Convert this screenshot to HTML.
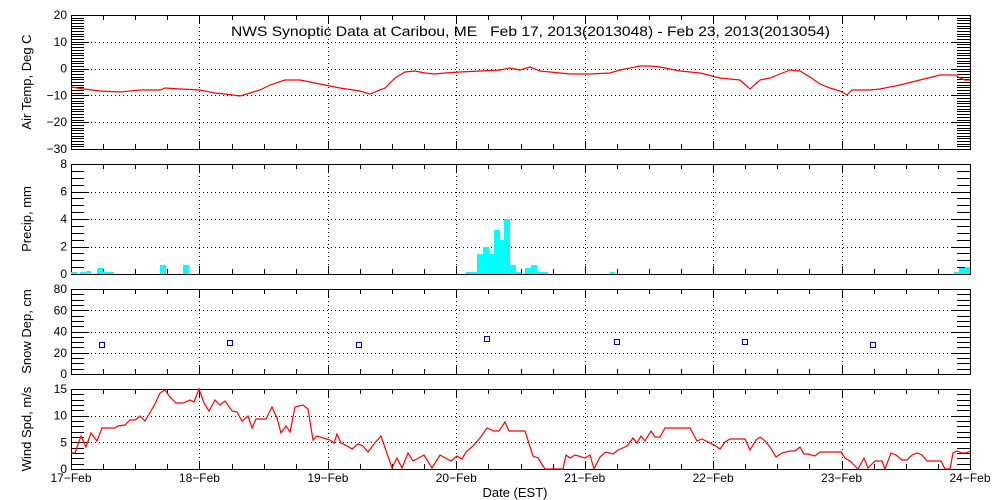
<!DOCTYPE html>
<html><head><meta charset="utf-8"><style>
html,body{margin:0;padding:0;background:#fff;width:1000px;height:500px;overflow:hidden}
svg{display:block}
text{font-family:"Liberation Sans",sans-serif;fill:#000}
</style></head><body>
<svg id="s" width="1000" height="500" viewBox="0 0 1000 500" xmlns="http://www.w3.org/2000/svg" shape-rendering="crispEdges">
<text x="231" y="36" font-size="14" textLength="599" lengthAdjust="spacingAndGlyphs" xml:space="preserve">NWS Synoptic Data at Caribou, ME   Feb 17, 2013(2013048) - Feb 23, 2013(2013054)</text>
<text x="515" y="497" font-size="13" text-anchor="middle">Date (EST)</text>
<g id="g"></g>
</svg>
<script>
var g=document.getElementById('g'),h='';
var X0=71,X1=970,DW=(X1-X0)/7;
function L(x1,y1,x2,y2,c,extra){h+='<line x1="'+x1+'" y1="'+y1+'" x2="'+x2+'" y2="'+y2+'" stroke="'+(c||'#000')+'" stroke-width="1" '+(extra||'')+'/>';}
function T(x,y,s,a,sz,ex){h+='<text x="'+x+'" y="'+y+'" font-size="'+(sz||12)+'" text-anchor="'+(a||'end')+'" '+(ex||'')+'>'+s+'</text>';}
var P=[
 {t:15,b:149,min:-30,max:20,minor:1,major:10,labels:[-30,-20,-10,0,10,20],grid:[-20,-10,0,10],name:'Air Temp, Deg C'},
 {t:164,b:274,min:0,max:8,minor:0.5,major:2,labels:[0,2,4,6,8],grid:[2,4,6],name:'Precip, mm'},
 {t:289,b:374,min:0,max:80,minor:5,major:20,labels:[0,20,40,60,80],grid:[20,40,60],name:'Snow Dep, cm'},
 {t:389,b:469,min:0,max:15,minor:1,major:5,labels:[0,5,10,15],grid:[5,10],name:'Wind Spd, m/s'}];
P.forEach(function(p,i){
 var Y=function(v){return p.b-(v-p.min)/(p.max-p.min)*(p.b-p.t);};p.Y=Y;
 p.grid.forEach(function(v){var y=Math.round(Y(v))+.5;L(X0,y,X1,y,'#000','stroke-dasharray="1,3"');});
 for(var d=1;d<7;d++){var x=Math.round(X0+d*DW)+.5;L(x,p.t,x,p.b,'#000','stroke-dasharray="1,3"');}
 for(var v=p.min;v<=p.max+1e-6;v+=p.minor){var y=Math.round(Y(v))+.5;var mj=Math.abs(v/p.major-Math.round(v/p.major))<1e-6;var len=mj?18:13;L(X0,y,X0+len,y);L(X1-len,y,X1,y);}
 for(var q=1;q<28;q++){var x=Math.round(X0+q*DW/4)+.5;var len=q%4==0?8:5;L(x,p.t,x,p.t+len);L(x,p.b-len,x,p.b);}
 h+='<rect x="'+(X0+.5)+'" y="'+(p.t+.5)+'" width="'+(X1-X0)+'" height="'+(p.b-p.t)+'" fill="none" stroke="#000" stroke-width="1.2"/>';
 p.labels.forEach(function(v){T(67,Y(v)+4,(v<0?'\u2212':'')+Math.abs(v),'end',12);});
 var cy=(p.t+p.b)/2;T(31,cy,p.name,'middle',13,'transform="rotate(-90 31 '+cy+')" dy="-0"');
});
var days=['17','18','19','20','21','22','23','24'];
days.forEach(function(d,i){T(X0+i*DW,482,d+'\u2212Feb','middle',12);});
// temp
var tp=[[71,87],[84,89],[100,91],[120,92],[140,90],[160,90],[165,88],[180,89],[200,90],[215,93],[225,94],[240,96],[250,93],[260,90],[270,85],[285,80],[300,80],[320,84],[340,88],[360,91],[370,94],[385,88],[395,78],[405,72],[415,71],[425,73],[435,74],[445,73],[460,72],[480,71],[500,70],[510,68],[520,70],[530,67],[540,71],[550,72],[560,73],[570,74],[590,74],[610,73],[620,70],[640,66],[650,66],[660,67],[680,71],[700,73],[720,78],[740,80],[750,89],[760,80],[770,78],[780,74],[790,70],[800,71],[810,77],[820,84],[830,88],[840,91],[847,95],[852,90],[870,90],[880,89],[900,85],[920,80],[940,75],[955,75],[960,78],[965,80],[970,80]];
h+='<polyline fill="none" stroke="#f00" stroke-width="1.2" shape-rendering="auto" points="'+tp.join(' ')+'"/>';
// precip
var pb=[[71,77,272],[80,86,272],[86,91,271],[97,103,268],[103,114,272],[160,166,265],[183,189,265],[466,477,272],[477,483,254],[483,489,247],[489,494,254],[494,500,230],[500,504,240],[504,510,219],[510,516,265],[516,521,272],[525,531,268],[531,537,265],[537,548,272],[610,615,272],[954,959,272],[959,965,268],[965,970,267]];
pb.forEach(function(b){h+='<rect x="'+b[0]+'" y="'+b[2]+'" width="'+(b[1]-b[0])+'" height="'+(274-b[2])+'" fill="#00ffff"/>';});
// snow
[[102,345],[230,343],[359,345],[487,339],[617,342],[745,342],[873,345]].forEach(function(s){h+='<rect x="'+(s[0]-2.5)+'" y="'+(s[1]-2.5)+'" width="5" height="5" fill="none" stroke="#0000c0" stroke-width="1.2"/>';});
// wind
var wp=[[71,453],[75,453],[81,436],[86,447],[91,433],[97,441],[102,428],[115,428],[118,426],[125,425],[130,420],[135,420],[140,416],[145,421],[155,404],[160,393],[165,390],[170,397],[176,403],[183,403],[190,400],[194,402],[199,389],[204,403],[209,411],[215,400],[220,405],[225,401],[232,411],[237,412],[242,421],[248,416],[252,428],[256,419],[266,419],[272,407],[277,418],[281,433],[286,426],[290,432],[295,407],[303,405],[308,409],[313,440],[317,436],[330,440],[334,443],[337,434],[341,443],[349,447],[352,449],[358,444],[363,446],[368,452],[374,444],[381,436],[392,468],[397,458],[402,468],[408,453],[413,461],[424,455],[432,468],[440,455],[451,461],[457,456],[462,459],[466,452],[473,446],[480,438],[487,428],[494,431],[499,431],[505,422],[509,431],[525,431],[533,456],[538,458],[545,469],[563,469],[566,455],[570,458],[575,455],[585,458],[590,455],[594,469],[600,457],[606,452],[613,454],[618,450],[625,447],[628,445],[633,438],[637,443],[641,436],[645,441],[651,431],[655,437],[660,437],[665,428],[690,428],[697,441],[702,439],[712,444],[714,445],[720,449],[725,442],[730,439],[745,439],[750,450],[756,440],[760,437],[765,441],[770,447],[776,457],[782,453],[790,451],[795,451],[800,447],[804,454],[808,454],[815,456],[820,452],[841,452],[845,458],[850,461],[858,469],[864,458],[868,468],[875,461],[882,461],[885,469],[891,453],[896,455],[902,460],[907,460],[912,455],[917,453],[922,455],[927,461],[941,461],[945,469],[950,469],[953,453],[957,451],[962,453],[966,453],[970,451]];
h+='<polyline fill="none" stroke="#f00" stroke-width="1.2" shape-rendering="auto" points="'+wp.join(' ')+'"/>';
g.innerHTML=h;
</script>
</body></html>
